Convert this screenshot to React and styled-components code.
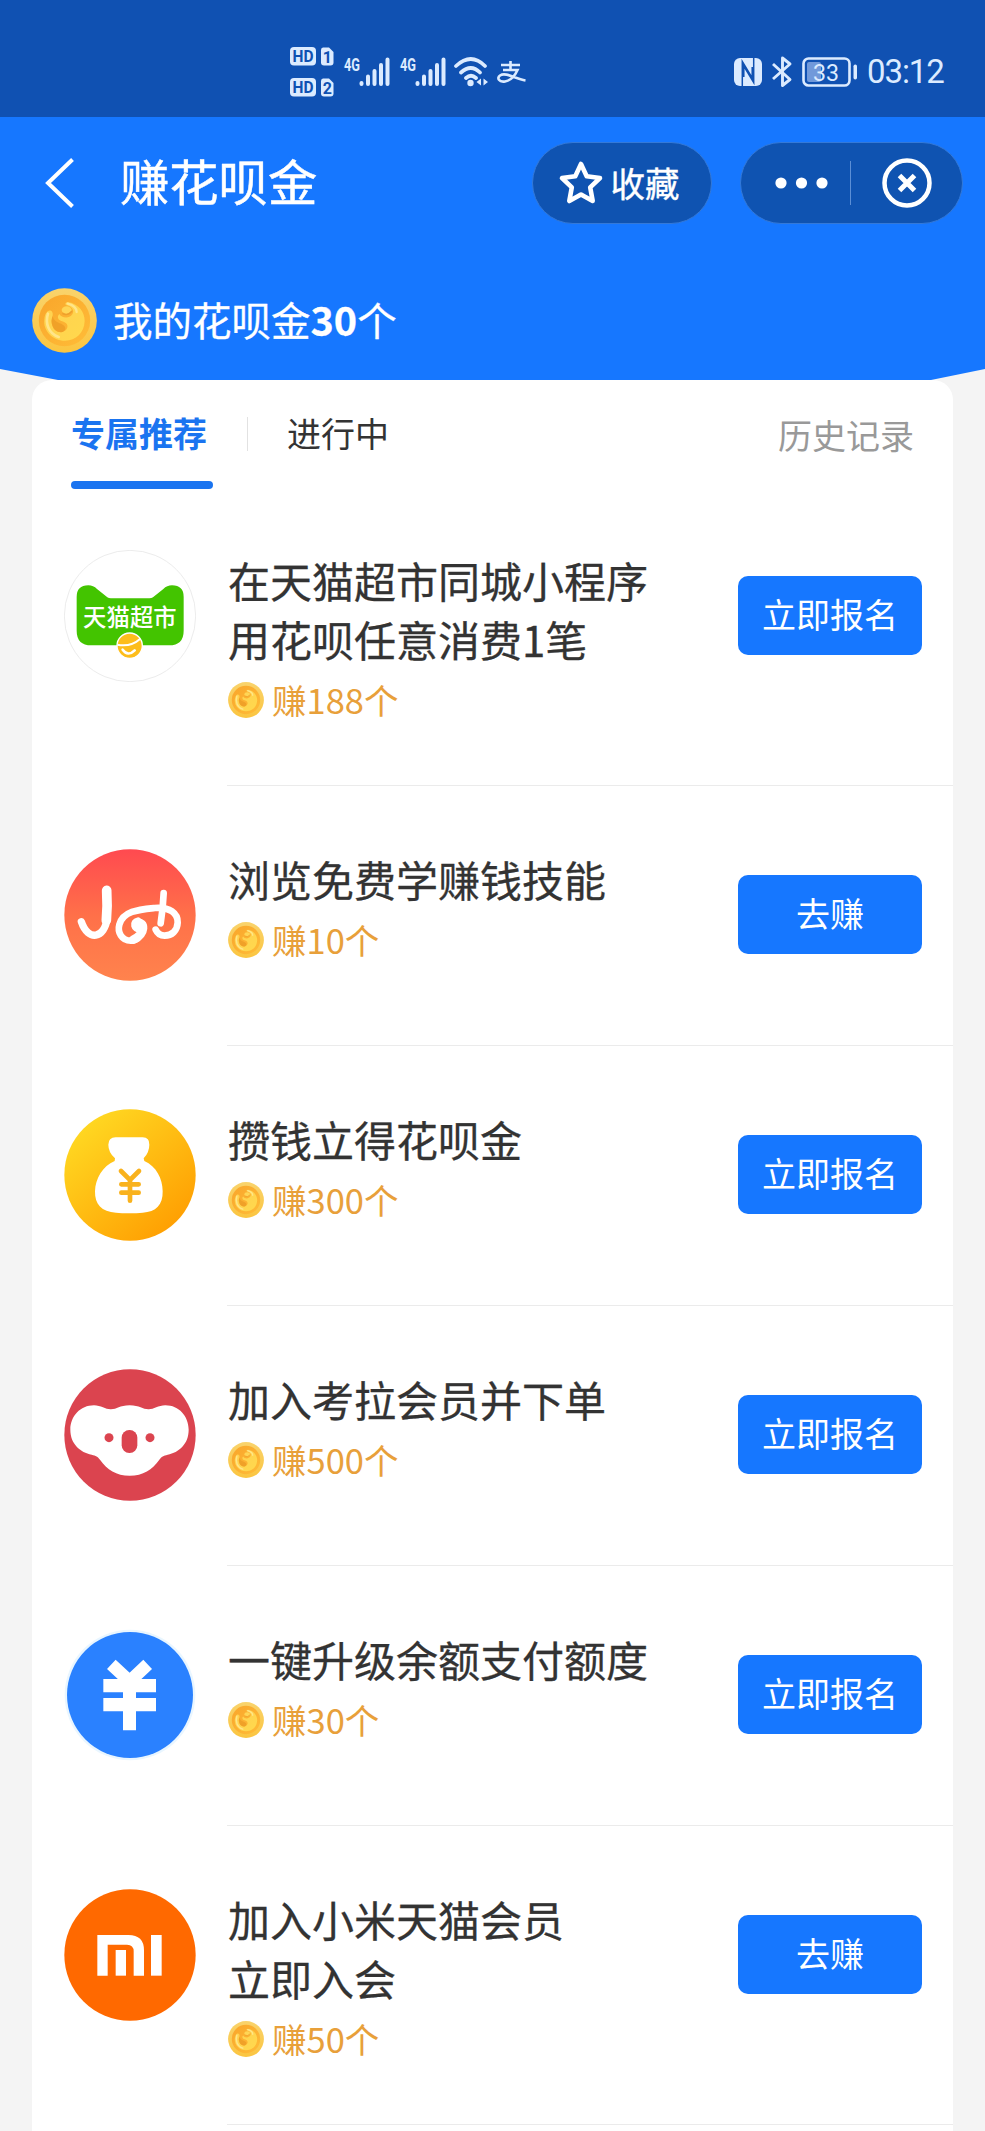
import React from "react";
import styled, { createGlobalStyle } from "styled-components";

const GlobalStyle = createGlobalStyle`
  * {
    box-sizing: border-box;
  }
  body {
    margin: 0;
    background: #f4f4f4;
    font-family: "Noto Sans CJK SC", "Noto Sans", sans-serif;
  }
  svg {
    display: block;
    flex: none;
  }
`;

const Page = styled.div`
  width: 985px;
  height: 2131px;
  overflow: hidden;
  background: #f4f4f4;
`;

const StatusBar = styled.div`
  height: 117px;
  padding: 0 41px 0 290px;
  display: flex;
  justify-content: space-between;
  background: #1051b2;
  color: #dcebff;
`;

const StatusGroup = styled.div`
  display: flex;
  align-items: center;
  padding-top: 26px;
`;

const StatusIcons = styled.div`
  display: flex;
  align-items: center;
  gap: ${props => props.gap}px;
  margin-left: ${props => props.inset || 0}px;
`;

const Clock = styled.span`
  width: 77px;
  margin-left: 9px;
  font-family: Roboto, sans-serif;
  font-size: 33px;
  line-height: 40px;
  letter-spacing: -1.1px;
  white-space: nowrap;
`;

const Header = styled.header`
  height: 263px;
  background: #1677ff;
  color: #fff;
  clip-path: polygon(0 0, 100% 0, 100% 252px, 931px 263px, 58px 263px, 0 252px);
`;

const TitleBar = styled.div`
  height: 132px;
  padding: 0 22px 0 44px;
  display: flex;
  align-items: center;
`;

const PageTitle = styled.h1`
  flex: 1;
  margin: 0 0 6px 44px;
  font-size: 49.3px;
  font-weight: 400;
  line-height: 70px;
  -webkit-text-stroke: 0.5px #fff;
`;

const Capsule = styled.div`
  width: ${props => props.width}px;
  height: 82px;
  margin-left: ${props => props.gap || 0}px;
  padding-left: ${props => props.inset}px;
  display: flex;
  align-items: center;
  border: 1px solid #3479d8;
  border-radius: 41px;
  background: #0f53b1;
  font-size: 34.5px;
  line-height: 50px;
`;

const CapsuleLabel = styled.span`
  margin: 0 0 2px 7px;
  -webkit-text-stroke: 0.4px #fff;
`;

const CapsuleDivider = styled.div`
  width: 1px;
  height: 44px;
  margin: 0 31px 0 22px;
  background: #5c8fd6;
`;

const Balance = styled.div`
  padding: 37px 0 0 32px;
  display: flex;
  align-items: center;
  font-size: 39.5px;
  line-height: 65px;
`;

const BalanceText = styled.span`
  margin: 0 0 3px 16px;
  -webkit-text-stroke: 0.3px #fff;
`;

const Amount = styled.b`
  font-weight: 700;
`;

const Card = styled.main`
  width: 921px;
  height: 1760px;
  margin: 0 auto;
  background: #fff;
  border-radius: 20px 20px 0 0;
`;

const Tabs = styled.nav`
  height: 110px;
  padding: 0 39px;
  display: flex;
  align-items: flex-start;
  font-size: 34px;
  line-height: 50px;
`;

const Tab = styled.div`
  width: ${props => (props.active ? 142 : 104)}px;
  height: 110px;
  padding-top: 28px;
  color: ${props => (props.active ? "#1a74f0" : "#333")};
  font-weight: ${props => (props.active ? 700 : 400)};
  &::after {
    content: "";
    display: ${props => (props.active ? "block" : "none")};
    height: 8px;
    margin-top: 23px;
    border-radius: 4px;
    background: #1a74f0;
  }
`;

const TabDivider = styled.div`
  width: 1px;
  height: 34px;
  margin: 37px 39px 0 34px;
  background: #e2e2e2;
`;

const History = styled.div`
  margin-left: auto;
  padding-top: 30px;
  color: #999;
`;

const List = styled.div`
  margin-top: -3px;
`;

const Row = styled.div`
  padding-left: 31.5px;
  display: flex;
`;

const Logo = styled.svg`
  width: 132px;
  height: 132px;
  margin-top: 63px;
`;

const RowBody = styled.div`
  flex: 1;
  height: ${props => (props.tall ? 299 : 260)}px;
  margin-left: 31px;
  padding-right: 31px;
  display: flex;
  justify-content: space-between;
  border-bottom: 1px solid #ebebeb;
`;

const RowText = styled.div`
  padding-top: 63px;
`;

const RowTitle = styled.div`
  padding-left: 1.5px;
  color: #333;
  font-size: 42px;
  line-height: 59px;
  white-space: pre-line;
  -webkit-text-stroke: 0.3px #333;
`;

const Reward = styled.div`
  height: 62px;
  display: flex;
  align-items: center;
  gap: 8px;
  padding-left: 1.5px;
  color: #e8a03a;
  font-size: 34.5px;
  svg {
    margin-top: 2px;
  }
`;

const Button = styled.button`
  width: 184px;
  height: 79px;
  margin: 89px 0 0;
  padding: 0 0 3px;
  border: 0;
  border-radius: 10px;
  background: #1677ff;
  color: #fff;
  font-family: inherit;
  font-size: 34px;
  line-height: 76px;
`;

const Coin = ({ size }) => (
  <svg width={size} height={size} viewBox="0 0 195 195">
    <defs>
      <linearGradient id="rim" x1="0" y1="0" x2="0" y2="1">
        <stop offset="0" stopColor="#f9d36c" />
        <stop offset="1" stopColor="#fbc540" />
      </linearGradient>
      <linearGradient id="face" x1="0" y1="0" x2="1" y2="1">
        <stop offset="0" stopColor="#f9a52b" />
        <stop offset="1" stopColor="#ffbd38" />
      </linearGradient>
      <linearGradient id="figure" x1="0" y1="0" x2="1" y2="1">
        <stop offset="0" stopColor="#ffd050" />
        <stop offset="1" stopColor="#ffd94d" />
      </linearGradient>
    </defs>
    <circle cx="97.500" cy="97.500" r="97" fill="url(#rim)" />
    <circle cx="97.500" cy="97.500" r="77" fill="url(#face)" />
    <path
      d="M47 70C56 63 64 71 62 82C58 96 57 108 64 121C75 136 99 136 105 121C111 108 98 101 86 98C77 94 75 85 82 78C88 90 111 94 121 79C129 67 118 55 104 52C98 49 99 43 108 42C142 48 158 74 158 99C157 134 132 158 99 158C61 158 33 127 37 95C38 84 40 76 47 70Z"
      fill="url(#figure)"
    />
    <path
      d="M62 85C66 101 80 104 92 110C103 116 102 126 93 131C80 136 67 128 62 114C57 103 58 94 62 85Z"
      fill="#f0a128"
    />
    <path
      d="M48 77C39 105 49 137 80 147"
      fill="none"
      stroke="#ffe58a"
      strokeWidth="8"
      strokeLinecap="round"
    />
    <ellipse cx="104" cy="66" rx="15" ry="11" fill="#ffd555" />
    <path d="M91 76Q106 86 120 69" fill="none" stroke="#eda02c" strokeWidth="4" />
    <path
      d="M107 47C125 52 134 60 134 72"
      fill="none"
      stroke="#ffe58a"
      strokeWidth="7"
      strokeLinecap="round"
    />
  </svg>
);

const TmallLogo = () => (
  <Logo viewBox="0 0 396 396">
    <circle cx="198" cy="198" r="197" fill="#fff" stroke="#ececec" strokeWidth="3" />
    <path
      d="M38 141Q38 106 73 106Q88 106 99 117L130 142Q134 145 141 145H256Q263 145 267 142L298 117Q309 106 324 106Q359 106 359 141V242Q359 286 315 286H82Q38 286 38 242Z"
      fill="#43c400"
    />
    <text
      x="57"
      y="228"
      fill="#fff"
      fontSize="70"
      fontWeight="500"
      textLength="281"
      fontFamily="Noto Sans CJK SC, sans-serif"
    >
      天猫超市
    </text>
    <circle cx="197" cy="287" r="38" fill="#fdbd1b" stroke="#fff" strokeWidth="4" />
    <path
      d="M160 284Q200 292 229 266"
      fill="none"
      stroke="#fff"
      strokeWidth="6"
    />
    <path
      d="M176 299Q192 321 212 301"
      fill="none"
      stroke="#fff"
      strokeWidth="8"
      strokeLinecap="round"
    />
  </Logo>
);

const JobLogo = () => (
  <Logo viewBox="0 0 396 396">
    <defs>
      <linearGradient id="job" x1="0" y1="0" x2="0" y2="1">
        <stop offset="0" stopColor="#ff4a50" />
        <stop offset="0.5" stopColor="#ff7049" />
        <stop offset="1" stopColor="#ff834d" />
      </linearGradient>
    </defs>
    <circle cx="198" cy="198" r="197" fill="url(#job)" />
    <g fill="none" stroke="#fff" strokeLinecap="round" strokeLinejoin="round">
      <path d="M128 124Q131 171 127 214" strokeWidth="29" />
      <path d="M130 206C122 270 72 278 52 218" strokeWidth="22" />
      <path
        d="M222 215C204 219 210 242 228 241C236 256 222 274 202 275C172 276 160 249 166 227C177 186 224 182 272 177C317 173 342 193 341 221C340 246 323 260 302 260C288 260 279 251 275 242"
        strokeWidth="20"
      />
      <path d="M218 222C244 216 246 254 208 272" strokeWidth="26" />
      <path d="M299 132Q297 180 290 223" strokeWidth="20" />
    </g>
  </Logo>
);

const BagLogo = () => (
  <Logo viewBox="0 0 396 396">
    <defs>
      <linearGradient id="bag" x1="0.150" y1="0.100" x2="0.850" y2="0.900">
        <stop offset="0" stopColor="#ffd822" />
        <stop offset="1" stopColor="#ff9f02" />
      </linearGradient>
    </defs>
    <circle cx="198" cy="198" r="197" fill="url(#bag)" />
    <path
      d="M155 85H236Q257 86 256 107Q256 130 239 148L241 156C277 172 296 209 296 247C297 288 276 309 236 311C213 313 178 313 156 311C113 309 92 286 93 247C94 209 116 171 152 156L153 148Q133 130 133 107Q133 86 155 85Z"
      fill="#fff"
    />
    <path
      d="M171 186L198 213L225 186M172 226H224M172 251H224M198 213V275"
      fill="none"
      stroke="#f9b21d"
      strokeWidth="14"
      strokeLinecap="round"
    />
  </Logo>
);

const KoalaLogo = () => (
  <Logo viewBox="0 0 396 396">
    <circle cx="198" cy="198" r="197" fill="#db444f" />
    <path
      d="M90 109C111 109 126 122 141 121C159 121 166 109 197 109C227 109 236 121 253 121C268 122 282 109 304 109C345 109 374 142 374 182C374 225 345 250 311 257C298 260 293 263 286 272C265 302 237 320 197 320C157 320 129 302 108 272C101 263 96 260 83 257C49 250 19 225 19 182C19 142 49 109 90 109Z"
      fill="#fff"
    />
    <circle cx="135" cy="206" r="13.500" fill="#db444f" />
    <circle cx="258" cy="206" r="13.500" fill="#db444f" />
    <rect x="173" y="183" width="47" height="69" rx="23" fill="#db444f" />
  </Logo>
);

const YuanLogo = () => (
  <Logo viewBox="0 0 396 396">
    <circle cx="198" cy="198" r="196" fill="#e9f6ff" />
    <circle cx="198" cy="198" r="189" fill="#2a81ff" />
    <path
      d="M142 106L197 157L251 106"
      fill="none"
      stroke="#fff"
      strokeWidth="38"
    />
    <path
      d="M118 150H276V190H216V207H276V247H216V304H177V247H118V207H177V190H118Z"
      fill="#fff"
    />
  </Logo>
);

const MiLogo = () => (
  <Logo viewBox="0 0 396 396">
    <circle cx="198" cy="198" r="197" fill="#ff6900" />
    <path
      d="M100 138H193Q240 138 240 184V260H209V187Q209 167 189 167H131V260H100Z"
      fill="#fff"
    />
    <rect x="155" y="183" width="31" height="77" fill="#fff" />
    <rect x="261" y="138" width="32" height="122" fill="#fff" />
  </Logo>
);

const SimBadges = () => (
  <svg width="44" height="50" viewBox="0 0 44 50" fontFamily="Roboto, sans-serif">
    {[0, 31].map((y, i) => (
      <g key={y} transform={`translate(0 ${y})`} fontWeight="700">
        <rect width="26" height="18.500" rx="4" fill="#dcebff" />
        <text x="2.500" y="15.300" fontSize="17" textLength="21" lengthAdjust="spacingAndGlyphs" fill="#1051b2">
          HD
        </text>
        <path d="M33 0.500H39L43.500 5V15.500Q43.500 18.500 40.500 18.500H34Q31 18.500 31 15.500V3Q31 0.500 33 0.500Z" fill="#dcebff" />
        <text x="32.800" y="15.500" fontSize="16" fill="#1051b2">
          {i + 1}
        </text>
      </g>
    ))}
  </svg>
);

const Signal = () => (
  <svg width="56" height="34" viewBox="0 0 56 34">
    <text
      x="10"
      y="15.500"
      fontSize="18"
      fontWeight="700"
      textLength="16"
      lengthAdjust="spacingAndGlyphs"
      fontFamily="Roboto, sans-serif"
      fill="#dcebff"
    >
      4G
    </text>
    <path
      d="M27.500 28V29M34 21.500V29M40.500 16V29M47 10V29M53.500 4.500V29"
      stroke="#dcebff"
      strokeWidth="4"
      strokeLinecap="round"
    />
  </svg>
);

const Wifi = () => (
  <svg width="36" height="34" viewBox="0 0 36 34" fill="none" stroke="#dcebff">
    <path
      d="M2 11Q17 -3 31 11M7 17.500Q17 8.500 26 17.500M12 23Q17 18.500 22 23"
      strokeWidth="3.700"
      strokeLinecap="round"
    />
    <circle cx="16.500" cy="28" r="3.200" fill="#dcebff" stroke="none" />
    <path d="M27 23.500V30.500L22.500 27ZM29.500 23.500V30.500L34 27Z" fill="#dcebff" stroke="none" />
  </svg>
);

const Alipay = () => (
  <svg width="30" height="24" viewBox="0 0 30 24" fill="none" stroke="#dcebff" strokeWidth="2.600">
    <path d="M4 5H23M13.500 1V10M6 10H20.500Q16 20 8 21.500C2 22.500 -0.500 18 3 15.500C9 11.500 18 19 28.500 20.500" />
  </svg>
);

const Nfc = () => (
  <svg width="28" height="28" viewBox="0 0 28 28">
    <rect width="28" height="28" rx="6" fill="#dcebff" />
    <path
      d="M8.300 28V3.500L18.200 20V9M19.700 0V24.500L9.800 8V19"
      fill="none"
      stroke="#1051b2"
      strokeWidth="1.500"
    />
  </svg>
);

const Bluetooth = () => (
  <svg width="22" height="32" viewBox="0 0 22 32">
    <path
      d="M2 8L19 23.500L11.500 29.500V2L19 8L2 23"
      fill="none"
      stroke="#dcebff"
      strokeWidth="2.900"
      strokeLinejoin="round"
    />
  </svg>
);

const Battery = () => (
  <svg width="56" height="30" viewBox="0 0 56 30">
    <rect x="1.500" y="1.500" width="46" height="27" rx="5" fill="none" stroke="#dcebff" strokeWidth="2.600" />
    <rect x="5" y="5" width="14" height="20" rx="2" fill="#7199da" />
    <rect x="51.500" y="7.500" width="3.500" height="15" rx="1.700" fill="#dcebff" />
    <text x="11" y="23.500" fontSize="24" textLength="26" fontFamily="Roboto, sans-serif" fill="#dcebff" lengthAdjust="spacingAndGlyphs">
      33
    </text>
  </svg>
);

const BackIcon = () => (
  <svg width="32" height="50" viewBox="0 0 32 50">
    <path d="M28.500 1.500L4 25L28.500 48.500" fill="none" stroke="#fff" strokeWidth="4" />
  </svg>
);

const StarIcon = () => (
  <svg width="46" height="46" viewBox="0 0 46 46">
    <path
      d="M23 4L28.700 16.300L42 18L32.200 27.300L34.700 41L23 34.500L11.300 41L13.800 27.300L4 18L17.300 16.300Z"
      fill="none"
      stroke="#fff"
      strokeWidth="4.600"
      strokeLinejoin="round"
    />
  </svg>
);

const MoreIcon = () => (
  <svg width="53" height="12" viewBox="0 0 53 12" fill="#fff">
    <circle cx="6" cy="6" r="5.600" />
    <circle cx="26.500" cy="6" r="5.600" />
    <circle cx="47" cy="6" r="5.600" />
  </svg>
);

const CloseIcon = () => (
  <svg width="50" height="50" viewBox="0 0 50 50" fill="none" stroke="#fff">
    <circle cx="25" cy="25" r="22.500" strokeWidth="4.500" />
    <path d="M17.500 17.500L32.500 32.500M32.500 17.500L17.500 32.500" strokeWidth="5" />
  </svg>
);

const tasks = [
  { logo: TmallLogo, title: "在天猫超市同城小程序\n用花呗任意消费1笔", count: 188, action: "立即报名" },
  { logo: JobLogo, title: "浏览免费学赚钱技能", count: 10, action: "去赚" },
  { logo: BagLogo, title: "攒钱立得花呗金", count: 300, action: "立即报名" },
  { logo: KoalaLogo, title: "加入考拉会员并下单", count: 500, action: "立即报名" },
  { logo: YuanLogo, title: "一键升级余额支付额度", count: 30, action: "立即报名" },
  { logo: MiLogo, title: "加入小米天猫会员\n立即入会", count: 50, action: "去赚" }
];

const TaskRow = ({ logo: TaskLogo, title, count, action }) => (
  <Row>
    <TaskLogo />
    <RowBody tall={title.includes("\n") ? 1 : 0}>
      <RowText>
        <RowTitle>{title}</RowTitle>
        <Reward>
          <Coin size={36} />
          <span>赚{count}个</span>
        </Reward>
      </RowText>
      <Button>{action}</Button>
    </RowBody>
  </Row>
);

export default function App() {
  return (
    <Page>
      <GlobalStyle />
      <StatusBar>
        <StatusGroup>
          <SimBadges />
          <Signal />
          <Signal />
          <StatusIcons gap={7} inset={8}>
            <Wifi />
            <Alipay />
          </StatusIcons>
        </StatusGroup>
        <StatusGroup>
          <StatusIcons gap={9}>
            <Nfc />
            <Bluetooth />
            <Battery />
          </StatusIcons>
          <Clock>03:12</Clock>
        </StatusGroup>
      </StatusBar>
      <Header>
        <TitleBar>
          <BackIcon />
          <PageTitle>赚花呗金</PageTitle>
          <Capsule width={180} inset={25}>
            <StarIcon />
            <CapsuleLabel>收藏</CapsuleLabel>
          </Capsule>
          <Capsule width={223.5} inset={34.5} gap={28}>
            <MoreIcon />
            <CapsuleDivider />
            <CloseIcon />
          </Capsule>
        </TitleBar>
        <Balance>
          <Coin size={65} />
          <BalanceText>
            我的花呗金<Amount>30</Amount>个
          </BalanceText>
        </Balance>
      </Header>
      <Card>
        <Tabs>
          <Tab active={1}>专属推荐</Tab>
          <TabDivider />
          <Tab>进行中</Tab>
          <History>历史记录</History>
        </Tabs>
        <List>
          {tasks.map(task => (
            <TaskRow key={task.title} {...task} />
          ))}
        </List>
      </Card>
    </Page>
  );
}
